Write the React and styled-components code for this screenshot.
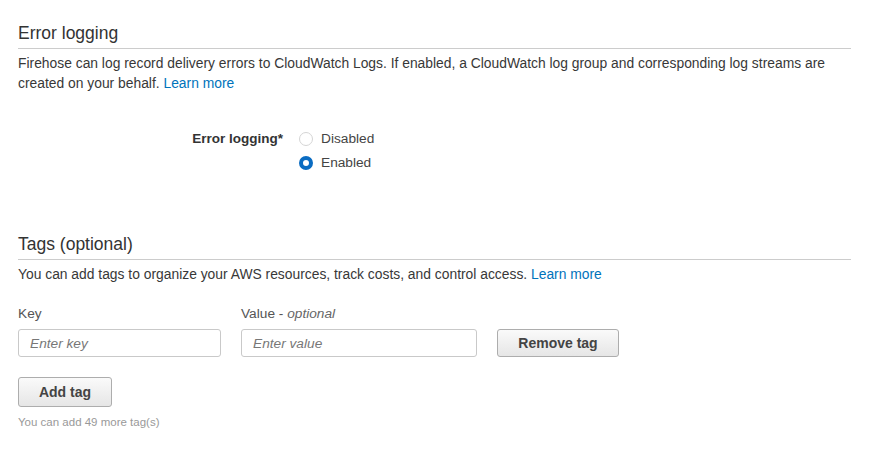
import React, { useState } from "react";
import styled, { createGlobalStyle } from "styled-components";

const GlobalStyle = createGlobalStyle`
  body {
    margin: 0;
    background: #fff;
    font-family: "Liberation Sans", Arial, sans-serif;
    color: #333;
  }
`;

function App() {
  const [logging, setLogging] = useState("enabled");
  return (
    <Page>
      <GlobalStyle />
      <Section>
        <Heading>Error logging</Heading>
        <Text>
          Firehose can log record delivery errors to CloudWatch Logs. If enabled, a CloudWatch log
          group and corresponding log streams are created on your behalf. <Link href="#">Learn more</Link>
        </Text>
        <FieldRow>
          <FieldLabel>Error logging*</FieldLabel>
          <RadioGroup>
            <RadioRow onClick={() => setLogging("disabled")}>
              <Radio checked={logging === "disabled"} />
              Disabled
            </RadioRow>
            <RadioRow onClick={() => setLogging("enabled")}>
              <Radio checked={logging === "enabled"} />
              Enabled
            </RadioRow>
          </RadioGroup>
        </FieldRow>
      </Section>

      <Section $top={59}>
        <Heading>Tags (optional)</Heading>
        <Text>
          You can add tags to organize your AWS resources, track costs, and control access.{" "}
          <Link href="#">Learn more</Link>
        </Text>
        <TagGrid>
          <Label>Key</Label>
          <Label>
            Value - <em>optional</em>
          </Label>
          <span />
          <Input placeholder="Enter key" />
          <Input placeholder="Enter value" />
          <Button>Remove tag</Button>
        </TagGrid>
        <AddButton>Add tag</AddButton>
        <Hint>You can add 49 more tag(s)</Hint>
      </Section>
    </Page>
  );
}

const Page = styled.div`
  width: 833px;
  padding: 23px 0 30px 18px;
`;
const Section = styled.section`
  margin-top: ${(p) => p.$top || 0}px;
`;
const Heading = styled.h2`
  margin: 0;
  font-size: 17.5px;
  font-weight: 400;
  line-height: 20px;
  color: #333;
  padding-bottom: 5px;
  border-bottom: 1px solid #ccc;
`;
const Text = styled.p`
  margin: 4px 0 0;
  font-size: 13.85px;
  line-height: 20px;
  color: #383838;
`;
const Link = styled.a`
  color: #0073bb;
  text-decoration: none;
`;
const FieldRow = styled.div`
  display: grid;
  grid-template-columns: 265px auto;
  column-gap: 16px;
  margin-top: 34px;
`;
const FieldLabel = styled.div`
  text-align: right;
  font-size: 13.5px;
  font-weight: 700;
  line-height: 24px;
  color: #333;
`;
const RadioGroup = styled.div`
  display: flex;
  flex-direction: column;
`;
const RadioRow = styled.label`
  display: flex;
  align-items: center;
  gap: 8px;
  font-size: 13.7px;
  line-height: 24px;
  color: #444;
  cursor: pointer;
`;
const Radio = styled.span`
  box-sizing: border-box;
  width: 14px;
  height: 14px;
  border-radius: 50%;
  background: #fff;
  border: ${(p) => (p.checked ? "4px solid #0a6cc2" : "1px solid #d5d5d5")};
`;
const TagGrid = styled.div`
  display: grid;
  grid-template-columns: 203px 236px 122px;
  column-gap: 20px;
  row-gap: 6px;
  align-items: end;
  margin-top: 21px;
`;
const Label = styled.div`
  font-size: 13.7px;
  line-height: 18px;
  color: #555;
  em {
    color: #666;
  }
`;
const Input = styled.input`
  box-sizing: border-box;
  height: 28px;
  padding: 0 11px;
  border: 1px solid #c9c9c9;
  border-radius: 3px;
  font-family: inherit;
  font-size: 13.7px;
  color: #333;
  outline: none;
  &::placeholder {
    color: #777;
    font-style: italic;
  }
`;
const Button = styled.button`
  box-sizing: border-box;
  height: 28px;
  border: 1px solid #adadad;
  border-radius: 3px;
  background: linear-gradient(#fafafa, #e6e6e6);
  font-family: inherit;
  font-size: 14px;
  font-weight: 700;
  color: #444;
  cursor: pointer;
`;
const AddButton = styled(Button)`
  display: block;
  width: 94px;
  height: 30px;
  margin-top: 20px;
`;
const Hint = styled.div`
  margin-top: 8px;
  font-size: 11.5px;
  line-height: 14px;
  color: #999;
`;

export default App;
